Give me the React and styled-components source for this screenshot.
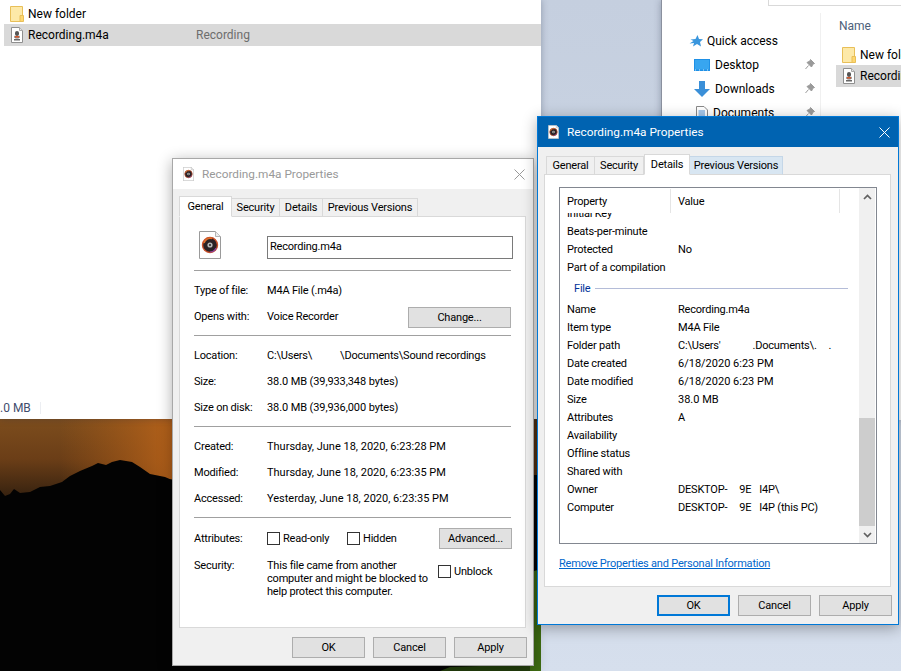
import React from "react";
import styled, { createGlobalStyle } from "styled-components";

const Global = createGlobalStyle`
  html, body { margin: 0; padding: 0; background: #fff; overflow: hidden; }
  * { box-sizing: border-box; }
  #root { width: 905px; height: 671px; overflow: hidden; }
`;

const Desktop = styled.div`
  position: relative;
  width: 901px;
  height: 671px;
  overflow: hidden;
  background: linear-gradient(180deg, #c5cfdf 0%, #cbd5e4 50%, #d6dfed 100%);
  font-family: Roboto, "Liberation Sans", sans-serif;
  font-size: 12px;
  color: #000;
`;

const WallpaperSvg = styled.svg`
  position: absolute;
  left: 0;
  top: 419px;
  display: block;
`;

const ExplorerLeft = styled.section`
  position: absolute;
  left: 0;
  top: 0;
  width: 541px;
  height: 419px;
  background: #fff;
  display: flex;
  flex-direction: column;
  padding-top: 3px;
  box-shadow: 0 0 7px rgba(40, 50, 70, 0.35);
`;

const FileRow = styled.div`
  display: flex;
  align-items: center;
  height: ${(p) => p.$h || 22}px;
  margin-left: 4px;
  padding-left: 6px;
  gap: 4px;
  background: ${(p) => (p.$selected ? "#d9d9d9" : "transparent")};
`;

const FileName = styled.span`
  width: 164px;
  white-space: nowrap;
`;

const FileTitle = styled.span`
  color: #6d6d6d;
`;

const StatusBar = styled.div`
  margin-top: auto;
  height: 22px;
  display: flex;
  align-items: center;
  color: #3f4d6d;
`;

const StatusText = styled.span`
  width: 40px;
`;

const StatusDivider = styled.span`
  width: 1px;
  height: 12px;
  background: #eceef2;
`;

const ExplorerRight = styled.section`
  position: absolute;
  left: 661px;
  top: 0;
  width: 240px;
  height: 420px;
  background: #fff;
  border-left: 1px solid #8a909e;
  display: flex;
  flex-direction: column;
  box-shadow: 0 0 7px rgba(40, 50, 70, 0.35);
`;

const AddressBox = styled.div`
  height: 6px;
  margin-left: 106px;
  border-left: 1px solid #d9d9d9;
  border-bottom: 1px solid #d9d9d9;
  flex: none;
`;

const ExplorerBody = styled.div`
  display: flex;
  flex: 1;
  padding-top: 7px;
  overflow: hidden;
`;

const NavPane = styled.nav`
  width: 159px;
  flex: none;
  border-right: 1px solid #f0f0f0;
  padding-top: 16px;
`;

const NavItem = styled.div`
  display: flex;
  align-items: center;
  height: 24px;
  padding-left: ${(p) => p.$indent}px;
  gap: ${(p) => p.$gap || 5}px;
  position: relative;
`;

const NavPin = styled.svg`
  position: absolute;
  left: 143px;
  top: 6px;
`;

const ContentPane = styled.div`
  flex: 1;
  padding-left: 15px;
  overflow: hidden;
`;

const ColumnHead = styled.div`
  height: 12px;
  padding-left: 3px;
  color: #4c607a;
  line-height: 12px;
  margin-top: 7px;
  margin-bottom: 12px;
`;

const PaneRow = styled.div`
  display: flex;
  align-items: center;
  height: ${(p) => p.$h}px;
  padding-left: 6px;
  gap: 4px;
  white-space: nowrap;
  overflow: hidden;
  background: ${(p) => (p.$selected ? "#d9d9d9" : "transparent")};
`;

const Dialog = styled.section`
  position: absolute;
  left: ${(p) => p.$left}px;
  top: ${(p) => p.$top}px;
  width: 362px;
  height: ${(p) => p.$h}px;
  display: flex;
  flex-direction: column;
  background: #f0f0f0;
  border: 1px solid ${(p) => (p.$active ? "#0078d7" : "#a8a8a8")};
  box-shadow: 0 3px 14px rgba(0, 0, 0, 0.32);
  font-size: 11px;
  letter-spacing: -0.2px;
`;

const TitleBar = styled.header`
  flex: none;
  height: 30px;
  display: flex;
  align-items: center;
  padding: 0 8px 0 10px;
  gap: 8px;
  font-size: 11.8px;
  letter-spacing: 0;
  background: ${(p) => (p.$active ? "#0063b1" : "#fff")};
  color: ${(p) => (p.$active ? "#fff" : "#999")};
`;

const TitleText = styled.span`
  flex: 1;
  white-space: nowrap;
`;

const TabStrip = styled.div`
  flex: none;
  height: ${(p) => p.$h}px;
  display: flex;
  align-items: flex-end;
  padding-left: ${(p) => p.$pad}px;
  margin-bottom: -1px;
  position: relative;
  z-index: 1;
`;

const Tab = styled.div`
  width: ${(p) => p.$w}px;
  height: ${(p) => (p.$selected ? 21 : 19)}px;
  display: flex;
  align-items: center;
  justify-content: center;
  padding-bottom: ${(p) => (p.$selected ? 1 : 0)}px;
  background: ${(p) => (p.$selected ? "#fff" : p.$hover ? "#d8e6f2" : "#f0f0f0")};
  border: 1px solid ${(p) => (p.$hover ? "#c5d7e8" : "#d9d9d9")};
  border-left-width: ${(p) => (p.$selected || p.$first ? 1 : 0)}px;
  border-bottom-color: ${(p) => (p.$selected ? "#fff" : "#d9d9d9")};
  white-space: nowrap;
`;

const Panel = styled.div`
  flex: none;
  height: ${(p) => p.$h}px;
  margin: 0 7px 0 6px;
  background: #fff;
  border: 1px solid #d9d9d9;
  padding: ${(p) => p.$padTop}px 14px 0 14px;
  display: flex;
  flex-direction: column;
`;

const Footer = styled.footer`
  display: flex;
  justify-content: flex-end;
  gap: 8px;
  padding: ${(p) => p.$top}px 6px 0 0;
`;

const Button = styled.button`
  width: ${(p) => p.$w || 73}px;
  height: 21px;
  margin: 0;
  padding: 0;
  font: inherit;
  letter-spacing: inherit;
  color: #000;
  background: #e1e1e1;
  border: ${(p) => (p.$default ? "2px solid #0078d7" : "1px solid #adadad")};
  flex: none;
`;

const HeadRow = styled.div`
  display: flex;
  height: 28px;
`;

const BigIconCell = styled.div`
  width: ${(p) => p.$w}px;
  padding-left: 5px;
  flex: none;
`;

const NameInput = styled.div`
  width: 246px;
  height: 23px;
  flex: none;
  margin-top: 5px;
  border: 1px solid #7a7a7a;
  padding-left: 2px;
  line-height: 19px;
`;

const Separator = styled.hr`
  width: 317px;
  height: 1px;
  margin: ${(p) => p.$top || 0}px 0 0;
  border: 0;
  background: #a0a0a0;
  flex: none;
`;

const Section = styled.div`
  padding-top: ${(p) => p.$top}px;
  padding-bottom: ${(p) => p.$bottom}px;
`;

const PropRow = styled.div`
  display: grid;
  grid-template-columns: 73px 1fr auto;
  align-items: center;
  height: 26px;
  white-space: nowrap;
`;

const DateValue = styled.span`
  letter-spacing: 0;
`;

const SizeValue = styled.span`
  letter-spacing: -0.1px;
`;

const Redact = styled.span`
  display: inline-block;
  width: ${(p) => p.$w}px;
`;

const ChangeSlot = styled.div`
  padding-top: 3px;
  display: flex;
`;

const AttrRow = styled.div`
  display: flex;
  align-items: center;
  height: 26px;
`;

const AttrLabel = styled.span`
  width: 73px;
  flex: none;
`;

const CheckGroup = styled.label`
  display: flex;
  align-items: center;
  gap: 3px;
  width: ${(p) => p.$w}px;
  flex: none;
  white-space: nowrap;
`;

const Box = styled.span`
  width: 13px;
  height: 13px;
  border: 1px solid #333;
  background: #fff;
  flex: none;
`;

const SecurityRow = styled.div`
  display: flex;
  margin-top: 8px;
`;

const SecurityText = styled.p`
  margin: 0;
  width: 171px;
  flex: none;
  line-height: 13px;
`;

const UnblockSlot = styled.div`
  padding-top: 6px;
`;

const ListBox = styled.div`
  width: 318px;
  height: 357px;
  border: 1px solid #828790;
  display: flex;
  background: #fff;
  padding-right: 1px;
  flex: none;
  overflow: hidden;
`;

const ListBody = styled.div`
  flex: 1;
  min-width: 0;
  overflow: hidden;
`;

const ListHeader = styled.div`
  position: relative;
  z-index: 1;
  height: 25px;
  background: #fff;
  display: grid;
  grid-template-columns: 111px 169px 1fr;
  align-items: center;
`;

const HeaderCell = styled.div`
  height: 24px;
  padding-left: 7px;
  line-height: 26px;
  border-right: ${(p) => (p.$line ? "1px solid #e5e5e5" : "0")};
`;

const RowList = styled.div`
  margin-top: -9px;
`;

const DetailRow = styled.div`
  display: grid;
  grid-template-columns: 111px 1fr;
  height: 18px;
  line-height: 20px;
  padding-left: 7px;
  white-space: nowrap;
`;

const GroupRow = styled.div`
  display: flex;
  align-items: center;
  height: 24px;
  padding-left: 14px;
  gap: 5px;
  color: #003399;
`;

const GroupLabel = styled.span`
  width: 16px;
`;

const GroupLine = styled.span`
  width: 253px;
  height: 1px;
  background: #b4bcd8;
`;

const ScrollBar = styled.div`
  width: 16px;
  flex: none;
  display: flex;
  flex-direction: column;
  background: #f0f0f0;
`;

const ScrollArrow = styled.div`
  height: 17px;
  display: flex;
  align-items: center;
  justify-content: center;
  flex: none;
`;

const ScrollTrack = styled.div`
  flex: 1;
  display: flex;
  flex-direction: column;
  justify-content: flex-end;
`;

const ScrollThumb = styled.div`
  height: 108px;
  background: #cdcdcd;
`;

const LinkText = styled.a`
  margin-top: 12px;
  color: #0066cc;
  text-decoration: underline;
  line-height: 16px;
  white-space: nowrap;
`;

function Wallpaper() {
  return (
    <WallpaperSvg width="541" height="252" viewBox="0 0 541 252">
      <defs>
        <linearGradient id="sky" x1="0" y1="0" x2="0" y2="1">
          <stop offset="0" stopColor="#7d4d1d" />
          <stop offset="0.5" stopColor="#6b3e17" />
          <stop offset="1" stopColor="#33200f" />
        </linearGradient>
        <linearGradient id="glow" x1="0" y1="0" x2="1" y2="0">
          <stop offset="0" stopColor="#b05f16" stopOpacity="0" />
          <stop offset="1" stopColor="#c0661a" stopOpacity="0.9" />
        </linearGradient>
      </defs>
      <rect width="541" height="252" fill="#030303" />
      <rect width="541" height="80" fill="url(#sky)" />
      <rect x="60" width="120" height="60" fill="url(#glow)" />
      <rect x="180" width="361" height="60" fill="#5a3312" />
      <path
        d="M0 71 L5 77 L10 75 L14 70 L20 74 L30 73 L40 68 L50 67 L62 63 L70 57 L80 52 L92 47 L98 44 L106 46 L112 43 L120 41 L132 43 L140 48 L150 55 L165 58 L172 61 L300 58 L541 56 L541 252 L0 252 Z"
        fill="#030303"
      />
      <path d="M534 152 L541 150 L541 252 L500 252 L505 247 L520 244 L534 236 Z" fill="#3f6d12" />
      <path d="M440 252 L450 248 L480 247 L510 246 L530 240 L530 252 Z" fill="#24400c" />
    </WallpaperSvg>
  );
}

function FolderIcon() {
  return (
    <svg width="14" height="16" viewBox="0 0 14 16" style={{ flex: "none" }}>
      <path d="M0.5 0.5 H12.5 V15.5 H0.5 Z" fill="#fde9a8" stroke="#e8bf58" />
      <path d="M10 9.5 H13.5 V15.5 H10 Z" fill="#ffd76e" stroke="#e8bf58" />
    </svg>
  );
}

function MicFileIcon() {
  return (
    <svg width="14" height="16" viewBox="0 0 14 16" style={{ flex: "none" }}>
      <path d="M1.5 0.5 H9.5 L12.5 3.5 V15.5 H1.5 Z" fill="#fff" stroke="#8f8f8f" />
      <path d="M9.5 0.5 V3.5 H12.5" fill="#e4e4e4" stroke="#a8a8a8" />
      <rect x="5" y="4" width="4" height="5" rx="2" fill="#555" />
      <path d="M4 8 C4 11 10 11 10 8 L10 10 C9 12 5 12 4 10 Z" fill="#777" />
      <rect x="5" y="9" width="4" height="1.5" fill="#d8572a" />
      <rect x="4" y="12" width="6" height="1.5" fill="#666" />
    </svg>
  );
}

function DiscFileIcon({ size }) {
  return (
    <svg width={size} height={(size * 28) / 22} viewBox="0 0 22 28" style={{ flex: "none", display: "block" }}>
      <path d="M0.5 0.5 H16.5 L21.5 5.5 V27.5 H0.5 Z" fill="#fff" stroke="#9a9a9a" />
      <path d="M16.5 0.5 V5.5 H21.5" fill="#eee" stroke="#b5b5b5" />
      <circle cx="11" cy="14" r="7.5" fill="#2a2226" stroke="#c9502a" strokeWidth="1.4" />
      <path d="M5 12 A6.5 6.5 0 0 1 13 7.5" fill="none" stroke="#e0702c" strokeWidth="1.6" />
      <path d="M17 17 A6.5 6.5 0 0 1 11 21" fill="none" stroke="#8a3fa0" strokeWidth="1.2" />
      <circle cx="11" cy="14" r="2.6" fill="#b8b8b8" />
      <circle cx="11" cy="14" r="1" fill="#222" />
    </svg>
  );
}

function CloseIcon({ color }) {
  return (
    <svg width="11" height="11" viewBox="0 0 11 11" style={{ flex: "none" }}>
      <path d="M0.5 0.5 L10.5 10.5 M10.5 0.5 L0.5 10.5" stroke={color} strokeWidth="1" fill="none" />
    </svg>
  );
}

function Chevron({ up }) {
  return (
    <svg width="9" height="6" viewBox="0 0 9 6">
      <path d={up ? "M1 5 L4.5 1.5 L8 5" : "M1 1 L4.5 4.5 L8 1"} stroke="#606060" strokeWidth="1.7" fill="none" />
    </svg>
  );
}

function Star() {
  return (
    <svg width="14" height="14" viewBox="0 0 14 14" style={{ flex: "none" }}>
      <path d="M8.5 1 L10 5 L14 5.3 L11 8 L12 12.5 L8 10 L4 12.5 L5 9 L0.5 9.5 L4.5 7 L1.5 5.5 L6.5 5 Z" fill="#3a96dd" />
    </svg>
  );
}

function DesktopIcon() {
  return (
    <svg width="16" height="12" viewBox="0 0 16 12" style={{ flex: "none" }}>
      <rect x="0" y="0" width="16" height="12" fill="#1e90e6" />
      <rect x="1" y="1" width="14" height="9.5" fill="#38a6f0" />
      <path d="M1 11 H15" stroke="#cfe8fa" strokeDasharray="1 3" />
    </svg>
  );
}

function DownloadIcon() {
  return (
    <svg width="16" height="16" viewBox="0 0 16 16" style={{ flex: "none" }}>
      <path d="M5 0 H11 V8 H16 L8 16 L0 8 H5 Z" fill="#3a8fd8" />
    </svg>
  );
}

function DocsIcon() {
  return (
    <svg width="12" height="15" viewBox="0 0 12 15" style={{ flex: "none" }}>
      <path d="M0.5 0.5 H8 L11.5 4 V14.5 H0.5 Z" fill="#fff" stroke="#888" />
      <path d="M2.5 5 H9 M2.5 7 H9 M2.5 9 H9 M2.5 11 H9" stroke="#4a90d9" />
    </svg>
  );
}

function Pin() {
  return (
    <NavPin width="10" height="11" viewBox="0 0 10 11">
      <path d="M5.5 0.5 L9.5 4.5 L8 5 L6.5 8 L2 3.5 L5 2 Z M3.5 6.5 L0.5 10" fill="#9a9a9a" stroke="#9a9a9a" />
    </NavPin>
  );
}

const detailTop = [
  ["Initial Key", ""],
  ["Beats-per-minute", ""],
  ["Protected", "No"],
  ["Part of a compilation", ""],
];

function App() {
  return (
    <Desktop>
      <Global />
      <Wallpaper />
      <ExplorerLeft>
        <FileRow $h={21}>
          <FolderIcon />
          <FileName>New folder</FileName>
        </FileRow>
        <FileRow $selected>
          <MicFileIcon />
          <FileName>Recording.m4a</FileName>
          <FileTitle>Recording</FileTitle>
        </FileRow>
        <StatusBar>
          <StatusText>.0 MB</StatusText>
          <StatusDivider />
        </StatusBar>
      </ExplorerLeft>

      <ExplorerRight>
        <AddressBox />
        <ExplorerBody>
          <NavPane>
            <NavItem $indent={27} $gap={4}>
              <Star />
              <span>Quick access</span>
            </NavItem>
            <NavItem $indent={32}>
              <DesktopIcon />
              <span>Desktop</span>
              <Pin />
            </NavItem>
            <NavItem $indent={32}>
              <DownloadIcon />
              <span>Downloads</span>
              <Pin />
            </NavItem>
            <NavItem $indent={34}>
              <DocsIcon />
              <span>Documents</span>
              <Pin />
            </NavItem>
          </NavPane>
          <ContentPane>
            <ColumnHead>Name</ColumnHead>
            <PaneRow $h={21}>
              <FolderIcon />
              <span>New folder</span>
            </PaneRow>
            <PaneRow $h={22} $selected>
              <MicFileIcon />
              <span>Recording.m4a</span>
            </PaneRow>
          </ContentPane>
        </ExplorerBody>
      </ExplorerRight>

      <Dialog $left={172} $top={158} $h={508}>
        <TitleBar>
          <DiscFileIcon size={11} />
          <TitleText>Recording.m4a Properties</TitleText>
          <CloseIcon color="#999" />
        </TitleBar>
        <TabStrip $h={28} $pad={6}>
          <Tab $w={53} $selected $first>General</Tab>
          <Tab $w={48}>Security</Tab>
          <Tab $w={43}>Details</Tab>
          <Tab $w={95}>Previous Versions</Tab>
        </TabStrip>
        <Panel $h={412} $padTop={14}>
          <HeadRow>
            <BigIconCell $w={73}>
              <DiscFileIcon size={22} />
            </BigIconCell>
            <NameInput>Recording.m4a</NameInput>
          </HeadRow>
          <Separator $top={11} />
          <Section $top={6} $bottom={6}>
            <PropRow>
              <span>Type of file:</span>
              <span>M4A File (.m4a)</span>
            </PropRow>
            <PropRow>
              <span>Opens with:</span>
              <span>Voice Recorder</span>
              <ChangeSlot>
                <Button $w={103}>Change...</Button>
              </ChangeSlot>
            </PropRow>
          </Section>
          <Separator />
          <Section $top={6} $bottom={6}>
            <PropRow>
              <span>Location:</span>
              <span>C:\Users\<Redact $w={28} />\Documents\Sound recordings</span>
            </PropRow>
            <PropRow>
              <span>Size:</span>
              <SizeValue>38.0 MB (39,933,348 bytes)</SizeValue>
            </PropRow>
            <PropRow>
              <span>Size on disk:</span>
              <SizeValue>38.0 MB (39,936,000 bytes)</SizeValue>
            </PropRow>
          </Section>
          <Separator />
          <Section $top={6} $bottom={6}>
            <PropRow>
              <span>Created:</span>
              <DateValue>Thursday, June 18, 2020, 6:23:28 PM</DateValue>
            </PropRow>
            <PropRow>
              <span>Modified:</span>
              <DateValue>Thursday, June 18, 2020, 6:23:35 PM</DateValue>
            </PropRow>
            <PropRow>
              <span>Accessed:</span>
              <DateValue>Yesterday, June 18, 2020, 6:23:35 PM</DateValue>
            </PropRow>
          </Section>
          <Separator />
          <Section $top={7} $bottom={0}>
            <AttrRow>
              <AttrLabel>Attributes:</AttrLabel>
              <CheckGroup $w={80}>
                <Box />
                Read-only
              </CheckGroup>
              <CheckGroup $w={92}>
                <Box />
                Hidden
              </CheckGroup>
              <Button $w={73}>Advanced...</Button>
            </AttrRow>
            <SecurityRow>
              <AttrLabel>Security:</AttrLabel>
              <SecurityText>
                This file came from another computer and might be blocked to help protect this computer.
              </SecurityText>
              <UnblockSlot>
                <CheckGroup $w={70}>
                  <Box />
                  Unblock
                </CheckGroup>
              </UnblockSlot>
            </SecurityRow>
          </Section>
        </Panel>
        <Footer $top={9}>
          <Button>OK</Button>
          <Button>Cancel</Button>
          <Button>Apply</Button>
        </Footer>
      </Dialog>

      <Dialog $left={537} $top={116} $h={509} $active>
        <TitleBar $active>
          <DiscFileIcon size={11} />
          <TitleText>Recording.m4a Properties</TitleText>
          <CloseIcon color="#fff" />
        </TitleBar>
        <TabStrip $h={28} $pad={8}>
          <Tab $w={49} $first>General</Tab>
          <Tab $w={49}>Security</Tab>
          <Tab $w={46} $selected>Details</Tab>
          <Tab $w={93} $hover>Previous Versions</Tab>
        </TabStrip>
        <Panel $h={413} $padTop={12}>
          <ListBox>
            <ListBody>
              <ListHeader>
                <HeaderCell $line>Property</HeaderCell>
                <HeaderCell $line>Value</HeaderCell>
                <HeaderCell />
              </ListHeader>
              <RowList>
                {detailTop.map(([k, v]) => (
                  <DetailRow key={k}>
                    <span>{k}</span>
                    <span>{v}</span>
                  </DetailRow>
                ))}
                <GroupRow>
                  <GroupLabel>File</GroupLabel>
                  <GroupLine />
                </GroupRow>
                <DetailRow><span>Name</span><span>Recording.m4a</span></DetailRow>
                <DetailRow><span>Item type</span><span>M4A File</span></DetailRow>
                <DetailRow>
                  <span>Folder path</span>
                  <span>C:\Users'<Redact $w={32} />.Documents\.<Redact $w={12} />.</span>
                </DetailRow>
                <DetailRow><span>Date created</span><DateValue>6/18/2020 6:23 PM</DateValue></DetailRow>
                <DetailRow><span>Date modified</span><DateValue>6/18/2020 6:23 PM</DateValue></DetailRow>
                <DetailRow><span>Size</span><DateValue>38.0 MB</DateValue></DetailRow>
                <DetailRow><span>Attributes</span><span>A</span></DetailRow>
                <DetailRow><span>Availability</span><span /></DetailRow>
                <DetailRow><span>Offline status</span><span /></DetailRow>
                <DetailRow><span>Shared with</span><span /></DetailRow>
                <DetailRow>
                  <span>Owner</span>
                  <span>DESKTOP-<Redact $w={12} />9E<Redact $w={8} />I4P\</span>
                </DetailRow>
                <DetailRow>
                  <span>Computer</span>
                  <span>DESKTOP-<Redact $w={12} />9E<Redact $w={8} />I4P (this PC)</span>
                </DetailRow>
              </RowList>
            </ListBody>
            <ScrollBar>
              <ScrollArrow><Chevron up /></ScrollArrow>
              <ScrollTrack><ScrollThumb /></ScrollTrack>
              <ScrollArrow><Chevron /></ScrollArrow>
            </ScrollBar>
          </ListBox>
          <LinkText>Remove Properties and Personal Information</LinkText>
        </Panel>
        <Footer $top={8}>
          <Button $default>OK</Button>
          <Button>Cancel</Button>
          <Button>Apply</Button>
        </Footer>
      </Dialog>
    </Desktop>
  );
}

export default App;
